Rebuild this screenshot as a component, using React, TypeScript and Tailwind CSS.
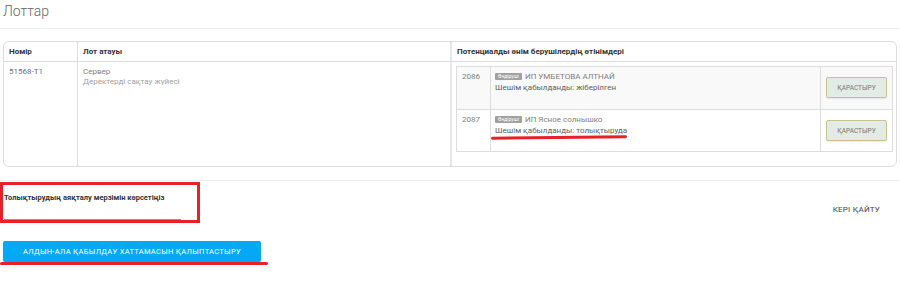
import React from "react";

const offers = [
  { id: "2086", name: "ИП УМБЕТОВА АЛТНАЙ", status: "Шешім қабылданды: жіберілген", striped: true },
  { id: "2087", name: "ИП Ясное солнышко", status: "Шешім қабылданды: толықтыруда", striped: false },
];

function Badge() {
  return (
    <span className="inline-block bg-[#a0a0a0] text-white text-[5px] leading-[7px] px-[3px] rounded-[1px] mr-[3px] align-[1px]">
      Өндіруші
    </span>
  );
}

export default function App() {
  return (
    <div className="relative w-[900px] h-[289px] bg-white font-['Roboto',sans-serif] overflow-hidden">
      {/* page title */}
      <div className="h-[29px] px-[3px] pt-[2px] text-[14px] font-light text-[#666] leading-[18px] border-b border-[#eee]">
        Лоттар
      </div>

      {/* lots table */}
      <div className="mt-[12px] ml-[3px] w-[894px] h-[126px] border border-[#ddd] rounded-[6px] overflow-hidden flex flex-col">
        <div className="flex h-[20px] border-b border-[#ddd] text-[8px] font-bold text-[#333] items-center">
          <div className="w-[74px] h-full pl-[5px] flex items-center border-r border-[#ddd]">Номір</div>
          <div className="w-[374px] h-full pl-[5px] flex items-center border-r-2 border-[#e6e6e6]">Лот атауы</div>
          <div className="flex-1 h-full pl-[5px] flex items-center">Потенциалды өнім берушілердің өтінімдері</div>
        </div>
        <div className="flex flex-1 text-[8px] text-[#808080] leading-[10px]">
          <div className="w-[74px] pl-[5px] pt-[5px] border-r border-[#ddd] text-[#707070]">51568-Т1</div>
          <div className="w-[374px] pl-[5px] pt-[5px] border-r-2 border-[#e6e6e6]">
            <div>Сервер</div>
            <div className="text-[#a0a0a0]">Деректерді сақтау жүйесі</div>
          </div>
          <div className="flex-1 pl-[4px] pt-[4px]">
            <div className="w-[437px] border border-[#ddd]">
              {offers.map((o, i) => (
                <div
                  key={o.id}
                  className={`flex h-[42px] ${i > 0 ? "border-t border-[#ddd]" : ""} ${o.striped ? "bg-[#f9f9f9]" : "bg-white"}`}
                >
                  <div className="w-[34px] pl-[5px] pt-[5px] border-r border-[#ddd]">{o.id}</div>
                  <div className="w-[330px] pl-[4px] pt-[5px] border-r border-[#ddd]">
                    <div className="text-[#808080]">
                      <Badge />
                      {o.name}
                    </div>
                    <div className="text-[#606060] mt-[1px]">{o.status}</div>
                  </div>
                  <div className="flex-1 flex items-start justify-center pt-[10px]">
                    <button className="w-[61px] h-[21px] bg-[#e3ebe6] border border-[#cdbf8e] rounded-[2px] text-[6.5px] text-[#777] shadow-[0_1px_1px_rgba(0,0,0,0.08)]">
                      ҚАРАСТЫРУ
                    </button>
                  </div>
                </div>
              ))}
            </div>
          </div>
        </div>
      </div>

      {/* divider */}
      <div className="mt-[13px] border-t border-[#eee]" />

      {/* deadline field + back link */}
      <div className="flex items-start justify-between">
        <div className="w-[199px] h-[39px] mt-[3px] pl-[4px] pt-[9px]">
          <div className="text-[7.5px] font-bold text-[#333] leading-[10px]">Толықтырудың аяқталу мерзімін көрсетіңіз</div>
          <div className="mt-[16px] w-[177px] border-b border-[#b88d5e]" />
        </div>
        <div className="mt-[23px] mr-[20px] text-[8px] text-[#444] tracking-[0.2px]">КЕРІ ҚАЙТУ</div>
      </div>

      <div className="mt-[14px] ml-[3px]">
        <button className="w-[258px] h-[21px] bg-[#03a9f4] rounded-[2px] text-white text-[7.5px] font-normal tracking-[0.3px] shadow-[0_1px_2px_rgba(0,0,0,0.15)]">
          АЛДЫН-АЛА ҚАБЫЛДАУ ХАТТАМАСЫН ҚАЛЫПТАСТЫРУ
        </button>
      </div>

      {/* red annotations */}
      <div className="absolute left-[491px] top-[136px] w-[136px] h-[3px] bg-[#e8202a] rounded-full -rotate-[0.6deg]" />
      <div className="absolute left-0 top-[182px] w-[200px] h-[41px] border-[3px] border-[#e8202a]" />
      <div className="absolute left-0 top-[262px] w-[268px] h-[3px] bg-[#e8202a] rounded-full" />
    </div>
  );
}
